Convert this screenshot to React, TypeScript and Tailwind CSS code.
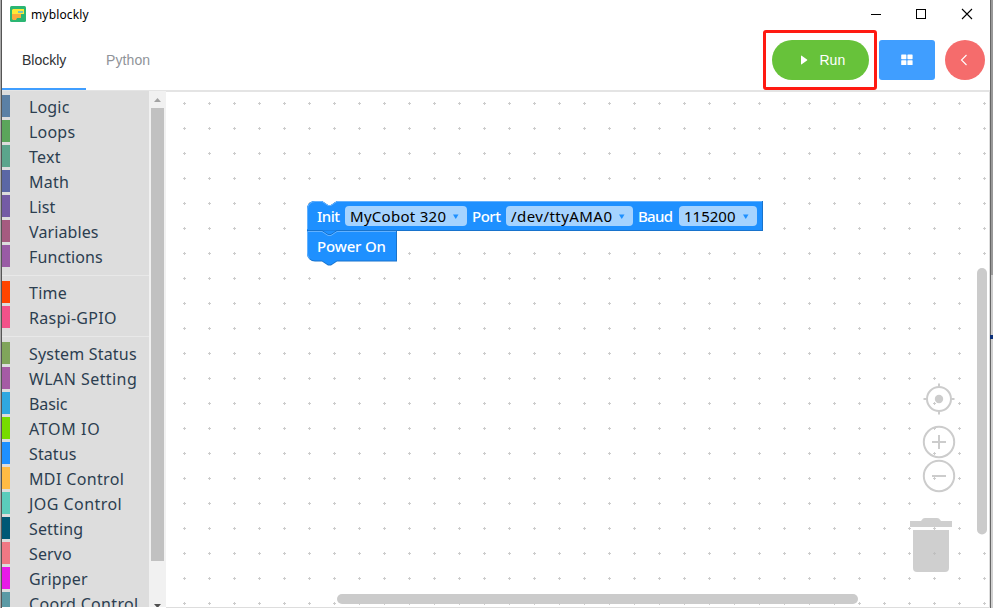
import React from "react";

type Category = { name: string; color: string; ls: string };

const groups: Category[][] = [
  [
    { name: "Logic", color: "bg-[#5b80a5]", ls: "tracking-[0.15px]" },
    { name: "Loops", color: "bg-[#5ba55b]", ls: "tracking-[0.2px]" },
    { name: "Text", color: "bg-[#5ba58c]", ls: "tracking-[0.3px]" },
    { name: "Math", color: "bg-[#5b67a5]", ls: "tracking-[0.25px]" },
    { name: "List", color: "bg-[#745ba5]", ls: "tracking-[0.1px]" },
    { name: "Variables", color: "bg-[#a55b80]", ls: "tracking-[0.1px]" },
    { name: "Functions", color: "bg-[#995ba5]", ls: "tracking-[0.1px]" },
  ],
  [
    { name: "Time", color: "bg-[#ff4500]", ls: "tracking-[0.25px]" },
    { name: "Raspi-GPIO", color: "bg-[#f2528a]", ls: "tracking-[0.27px]" },
  ],
  [
    { name: "System Status", color: "bg-[#80a55b]", ls: "tracking-[0.18px]" },
    { name: "WLAN Setting", color: "bg-[#a55ba5]", ls: "tracking-[0.43px]" },
    { name: "Basic", color: "bg-[#2fa8e0]", ls: "tracking-[-0.1px]" },
    { name: "ATOM IO", color: "bg-[#77dc00]", ls: "tracking-[0.65px]" },
    { name: "Status", color: "bg-[#1e90ff]", ls: "tracking-[0.1px]" },
    { name: "MDI Control", color: "bg-[#ffbb44]", ls: "tracking-[0.35px]" },
    { name: "JOG Control", color: "bg-[#5bccbb]", ls: "tracking-[0.45px]" },
    { name: "Setting", color: "bg-[#005875]", ls: "tracking-[0.15px]" },
    { name: "Servo", color: "bg-[#f07884]", ls: "tracking-[0.1px]" },
    { name: "Gripper", color: "bg-[#e81ae8]", ls: "tracking-[0.15px]" },
    { name: "Coord Control", color: "bg-[#5b9aa5]", ls: "tracking-[0.32px]" },
  ],
];

function TitleBar() {
  return (
    <div className="flex h-[30px] shrink-0 items-center pl-2">
      <svg width="16" height="16" viewBox="0 0 16 16" className="-mt-0.5">
        <rect width="16" height="16" rx="1.5" fill="#2bb673" />
        <path d="M3 3H14V8H2V4Z" fill="#ffe838" />
        <path d="M2 8H11V12H7L6 14H3L2 13Z" fill="#fbab3c" />
        <path d="M8 5H13V7H8Z" fill="#78c5b5" />
      </svg>
      <span className="ml-[5px] font-['Noto_Sans',sans-serif] text-[12px] leading-[28px] tracking-[0.15px] text-black">myblockly</span>
      <svg width="104" height="12" viewBox="0 0 104 12" className="ml-auto mr-[16px] -mt-0.5" fill="none" stroke="#000" shapeRendering="crispEdges">
        <path d="M1 6.5H11" />
        <rect x="46.5" y="1.5" width="9" height="9" />
        <path d="M92 1L102 11M102 1L92 11" shapeRendering="auto" strokeWidth="1.1" />
      </svg>
    </div>
  );
}

function Toolbar() {
  return (
    <div className="flex h-[62px] shrink-0 border-b-2 border-[#e4e4e4] font-['Liberation_Sans',Arial,sans-serif] text-[14px]">
      <div className="-mb-0.5 flex h-[60px] w-[84px] items-center border-b-2 border-[#409eff] pt-0.5 pl-5 text-[#303133]">Blockly</div>
      <div className="flex h-[60px] items-center pl-5 tracking-[0.1px] text-[#909399]">Python</div>
      <div className="ml-auto flex h-[60px] items-center pr-[5px]">
        <div className="flex h-[60px] w-[114px] items-center justify-center rounded-[3px] border-[3px] border-[#ff1a12]">
          <button className="flex h-10 w-[97px] items-center rounded-full bg-[#67c23a] pl-[29px] text-white">
            <svg width="7" height="10" viewBox="0 0 7 10" fill="#fff"><path d="M0 1.1Q0 .3.7.8L6 4.5Q6.7 5 6 5.500L.7 9.200Q0 9.700 0 8.900Z" /></svg>
            <span className="ml-3 text-[14px]">Run</span>
          </button>
        </div>
        <button className="ml-[2px] flex h-10 w-14 items-center justify-center rounded-[3px] bg-[#409eff]">
          <svg width="12" height="12" viewBox="0 0 12 12" fill="#fff">
            <rect x="0.2" y="0.4" width="5.2" height="4.8" rx=".6" />
            <rect x="6.4" y="0.4" width="5.2" height="4.8" rx=".6" />
            <rect x="0.2" y="6.2" width="5.2" height="4.8" rx=".6" />
            <rect x="6.4" y="6.2" width="5.2" height="4.8" rx=".6" />
          </svg>
        </button>
        <button className="ml-[10px] flex h-10 w-10 items-center justify-center rounded-full bg-[#f56c6c]">
          <svg width="8" height="12" viewBox="0 0 8 12" className="mr-[2px]" fill="none" stroke="#fff" strokeWidth="1.1"><path d="M6.500 1L1.500 6L6.500 11" /></svg>
        </button>
      </div>
    </div>
  );
}

function Toolbox() {
  return (
    <div className="-mt-px flex h-[516px] w-[164px] shrink-0 overflow-hidden">
      <div className="h-full w-[147px] overflow-hidden bg-[#ddd] pt-1 font-['Noto_Sans',sans-serif] text-[16px] text-[#2c3e50]">
        {groups.map((group, i) => (
          <React.Fragment key={i}>
            {i > 0 && <div className="mt-2 mb-[5px] h-px bg-[#e8e8e8]" />}
            {group.map((c) => (
              <div key={c.name} className="mb-[3px] flex h-[22px] items-center">
                <div className={"h-[22px] w-2 shrink-0 " + c.color} />
                <span className={"ml-[19px] pt-0.5 leading-[22px] whitespace-nowrap " + c.ls}>{c.name}</span>
              </div>
            ))}
          </React.Fragment>
        ))}
      </div>
      <div className="flex h-full w-[17px] flex-col items-center justify-between bg-[#f1f1f1]">
        <svg width="17" height="17" className="shrink-0" fill="#a3a3a3"><path d="M5 11H12L8.500 7Z" /></svg>
        <div className="h-[453px] w-[13px] shrink-0 bg-[#c1c1c1]" />
        <svg width="17" height="46" fill="#505050"><path d="M5 43H12L8.500 47Z" /></svg>
      </div>
    </div>
  );
}

const blockText = "font-['Noto_Sans',sans-serif] text-[15px]";
const labelText = "font-['Noto_Sans',sans-serif] text-[15px] font-medium";

function Field({ x, w, text, tw }: { x: number; w: number; text: string; tw: number }) {
  return (
    <g>
      <rect x={x} y="206" width={w} height="20" rx="4" fill="#a5d3ff" />
      <text x={x + 5} y="222" textLength={tw} className={blockText} fill="#000">{text}</text>
      <path d={`M${x + w - 14} 214.500H${x + w - 8.500}L${x + w - 11.250} 219Z`} fill="#1e90ff" />
    </g>
  );
}

function Workspace() {
  return (
    <svg width="824" height="516" viewBox="166 92 824 516" className="block shrink-0">
      <defs>
        <pattern id="grid" x="172" y="91" width="25" height="25" patternUnits="userSpaceOnUse">
          <path d="M11 12.5H14M12.5 11V14" stroke="#ccc" />
        </pattern>
      </defs>
      <rect x="166" y="92" width="824" height="516" fill="url(#grid)" />
      <path d="M166 607.5H989.5V92" fill="none" stroke="#ddd" />
      <g>
        <path d="M307 209a8 8 0 0 1 8-8H322l6 4h3l6-4H763V231H307Z" fill="#1873cc" />
        <path d="M307 209a8 8 0 0 1 8-8H322l6 4h3l6-4H762V230H307Z" fill="#1e90ff" />
        <path d="M307.500 229V209a7.500 7.500 0 0 1 7.500-7.500H322l6 4h3l6-4H762" fill="none" stroke="#62b1ff" />
      </g>
      <g>
        <path d="M307 231H322l6 4h3l6-4H397V261.500H337l-6 4h-3l-6-4H315a8 8 0 0 1-8-8Z" fill="#1873cc" />
        <path d="M307 231H396V260.500H337l-6 4h-3l-6-4H315a8 8 0 0 1-8-8Z" fill="#1e90ff" />
        <path d="M322 230.500l6 4h3l6-4" fill="#1e90ff" stroke="#1873cc" />
        <path d="M309.500 258.500a7.500 7.500 0 0 1-2-5.500V231.500H322l6 4h3l6-4H396" fill="none" stroke="#62b1ff" />
      </g>
      <text x="317" y="222" textLength="23" className={labelText} fill="#fff">Init</text>
      <text x="472" y="222" textLength="29" className={labelText} fill="#fff">Port</text>
      <text x="638" y="222" textLength="35" className={labelText} fill="#fff">Baud</text>
      <text x="317" y="252" textLength="69" className={labelText} fill="#fff">Power On</text>
      <Field x={345} w={122} text="MyCobot 320" tw={96} />
      <Field x={506} w={127} text="/dev/ttyAMA0" tw={101} />
      <Field x={679} w={78} text="115200" tw={51.5} />
      <g fill="none" stroke="#ccc" strokeWidth="2">
        <circle cx="939" cy="399" r="12" />
        <path d="M939 383.500V387M939 411V414.500M923.500 399H927M951 399H954.500" />
        <circle cx="939" cy="399" r="4.200" fill="#ccc" stroke="none" />
        <circle cx="939" cy="442" r="15.200" />
        <path d="M932 442H946M939 435V449" />
        <circle cx="939" cy="476" r="15.200" />
        <path d="M932 476H946" />
      </g>
      <g fill="#b8b8b8" fillOpacity=".68">
        <path d="M910 521H921L923 518.500Q924 518 925 518H937Q938 518 939 518.500L941 521H952V527H910Z" />
        <path d="M913 530H949V568Q949 572 945 572H917Q913 572 913 568Z" />
      </g>
      <rect x="977" y="268" width="10" height="266.500" rx="5" fill="#cbcbcb" />
      <rect x="337" y="594" width="521" height="10" rx="5" fill="#cbcbcb" />
    </svg>
  );
}

export default function App() {
  return (
    <div className="flex h-[608px] w-[993px] overflow-hidden bg-white">
      <div className="w-[2px] shrink-0 border-r border-[#555] bg-[#aaa]" />
      <div className="flex w-[988px] shrink-0 flex-col">
        <TitleBar />
        <Toolbar />
        <div className="flex h-[516px]">
          <Toolbox />
          <Workspace />
        </div>
      </div>
      <div className="flex w-[3px] shrink-0 flex-col border-l border-[#666] bg-[#aaa]">
        <div className="h-[275px] bg-[#999]" />
        <div className="h-[60px] bg-[#ccc]" />
        <div className="-ml-px h-[4px] bg-[#0b2f78]" />
        <div className="grow bg-[#d0d0d0]" />
      </div>
    </div>
  );
}
